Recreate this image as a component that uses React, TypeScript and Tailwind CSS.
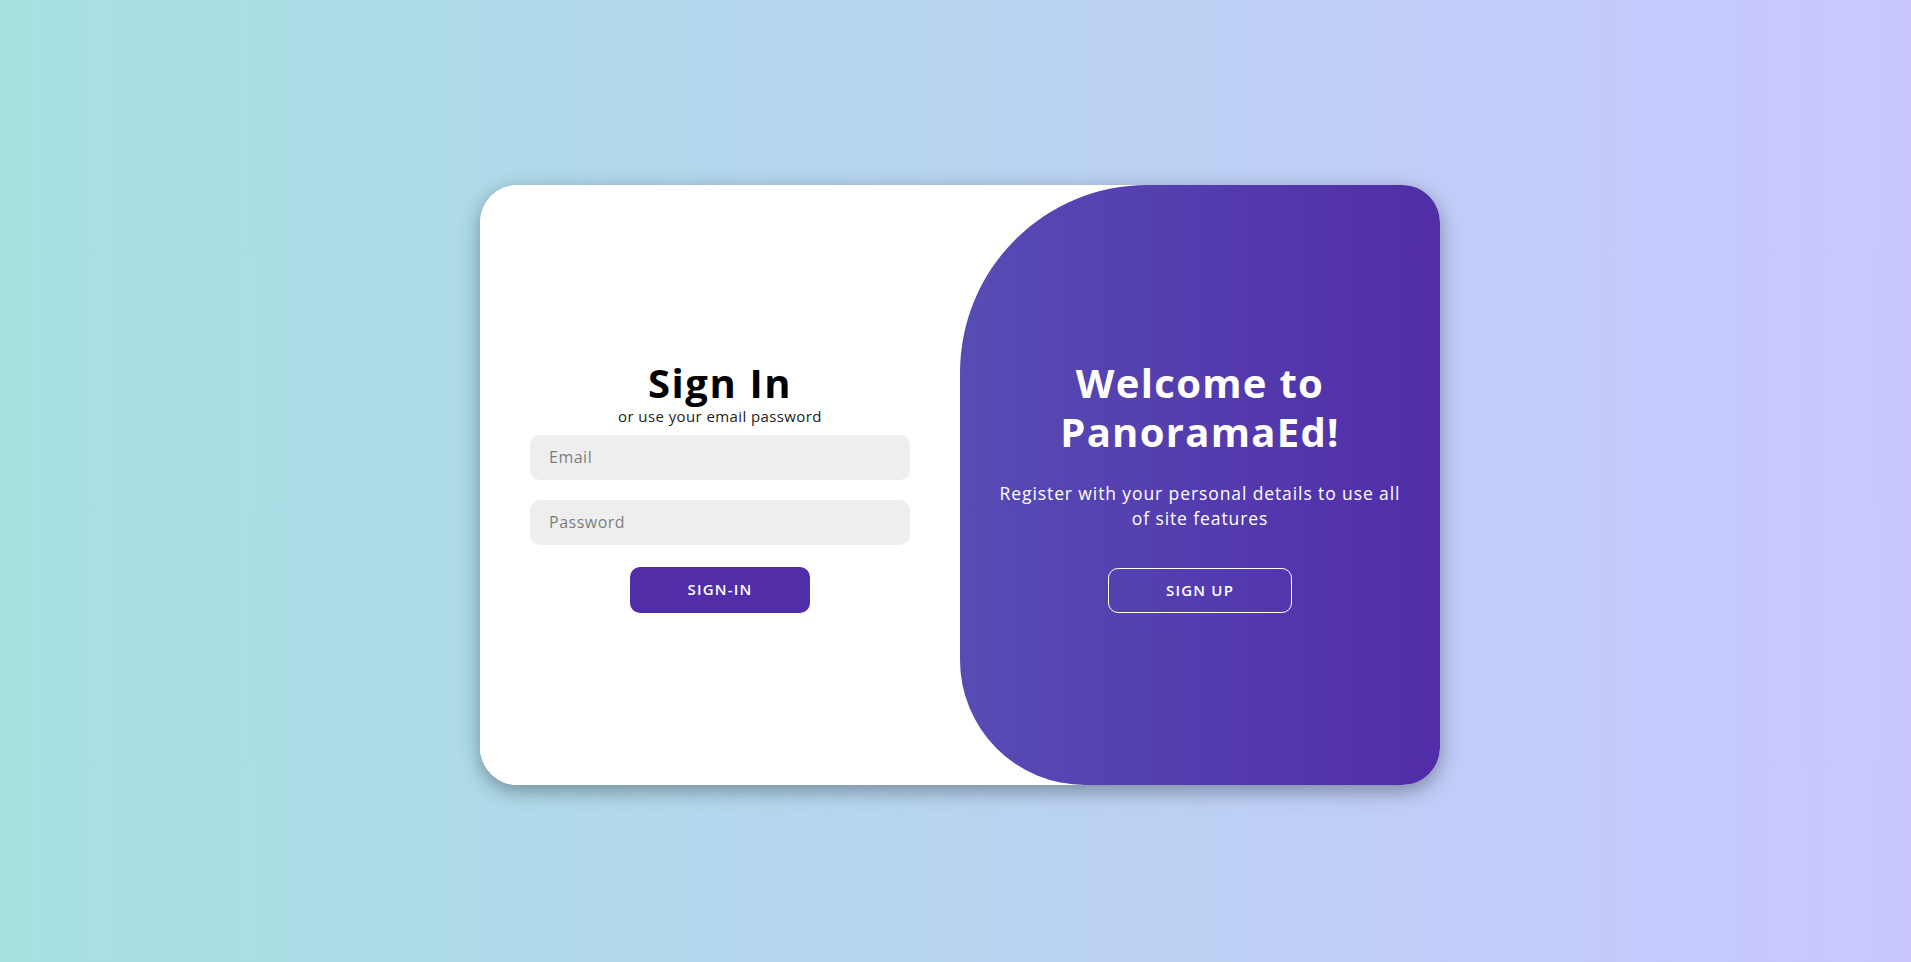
import React from 'react';

const font = { fontFamily: '"Open Sans", "Liberation Sans", sans-serif' };

const SignInForm: React.FC = () => {
  return (
    <form
      className="w-1/2 h-full flex flex-col items-center justify-center px-[50px] bg-white"
      onSubmit={(e) => e.preventDefault()}
    >
      <h1 className="text-[40px] leading-[49px] font-bold tracking-[1.6px] text-black">Sign In</h1>
      <span className="text-[15px] leading-[18px] tracking-[0.4px] text-[#222]">or use your email password</span>
      <input
        type="email"
        placeholder="Email"
        className="w-full h-[45px] my-[10px] px-[19px] rounded-[10px] bg-[#eee] text-[16px] tracking-[0.5px] outline-none"
      />
      <input
        type="password"
        placeholder="Password"
        className="w-full h-[45px] my-[10px] px-[19px] rounded-[10px] bg-[#eee] text-[16px] tracking-[0.5px] outline-none"
      />
      <button
        type="submit"
        className="mt-[12px] h-[46px] w-[180px] rounded-[10px] bg-[#512da8] text-white text-[15px] font-semibold tracking-[1.2px] uppercase"
      >
        Sign-in
      </button>
    </form>
  );
};

const WelcomePanel: React.FC = () => {
  return (
    <div className="w-1/2 h-full flex flex-col items-center justify-center px-[37px] text-center text-white rounded-[187.5px_0_0_125px] bg-[linear-gradient(to_right,#574cb4,#512da8)]">
      <h1 className="text-[40px] leading-[49px] font-bold tracking-[1.3px]">
        Welcome to
        <br />
        PanoramaEd!
      </h1>
      <p className="my-[25px] text-[17.5px] leading-[25px] tracking-[0.9px]">
        Register with your personal details to use all of site features
      </p>
      <button
        type="button"
        className="mt-[12px] h-[45px] w-[184px] rounded-[10px] border border-white bg-transparent text-white text-[15px] font-semibold tracking-[1.2px] uppercase"
      >
        Sign Up
      </button>
    </div>
  );
};

export default function App() {
  return (
    <div
      className="min-h-screen w-full flex items-center justify-center pl-[9px] pt-[8px] bg-[linear-gradient(to_right,#a6e1e1,#c9c6ff)]"
      style={font}
    >
      <div className="w-[960px] h-[600px] flex rounded-[37.5px] bg-white overflow-hidden shadow-[0_6px_19px_rgba(0,0,0,0.35)]">
        <SignInForm />
        <WelcomePanel />
      </div>
    </div>
  );
}
